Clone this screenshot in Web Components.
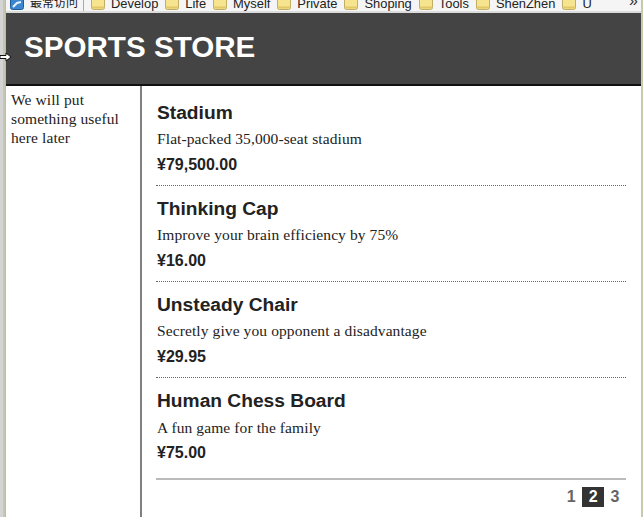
<!DOCTYPE html>
<html>
<head>
<meta charset="utf-8">
<style>
html, body { margin: 0; height: 100%; overflow: hidden; background: #fff; }
body { display: flex; flex-direction: column; height: 517px; width: 643px; position: relative; }
</style>
</head>
<body>
<window-frame>
  <bookmark-bar>
    <bookmark-item kind="star">最常访问</bookmark-item>
    <bookmark-item>Develop</bookmark-item>
    <bookmark-item>Life</bookmark-item>
    <bookmark-item>Myself</bookmark-item>
    <bookmark-item>Private</bookmark-item>
    <bookmark-item>Shoping</bookmark-item>
    <bookmark-item>Tools</bookmark-item>
    <bookmark-item>ShenZhen</bookmark-item>
    <bookmark-item>U</bookmark-item>
  </bookmark-bar>
  <store-header>SPORTS STORE</store-header>
  <store-body>
    <store-sidebar>We will put something useful here later</store-sidebar>
    <product-list>
      <product-item name="Stadium" price="¥79,500.00">Flat-packed 35,000-seat stadium</product-item>
      <product-item name="Thinking Cap" price="¥16.00">Improve your brain efficiency by 75%</product-item>
      <product-item name="Unsteady Chair" price="¥29.95">Secretly give you opponent a disadvantage</product-item>
      <product-item name="Human Chess Board" price="¥75.00" last>A fun game for the family</product-item>
      <page-links slot="pager" current="2" count="3"></page-links>
    </product-list>
  </store-body>
</window-frame>
<script>
class WindowFrame extends HTMLElement {
  constructor() {
    super()
    this.attachShadow({ mode: "open" }).innerHTML = `
    <style>
    :host { display: flex; flex: 1; min-height: 0; background: #fff; position: relative; }
    .left { width: 6px; flex: none; background: linear-gradient(to right, #d4d4d4 0, #d4d4d4 3px, #c4c8b0 3px, #c4c8b0 5px, #b9c482 5px); }
    .right { width: 2px; flex: none; background: #c6ccaa; }
    .page { flex: 1; min-width: 0; display: flex; flex-direction: column; }
    .cursor { position: absolute; left: 0; top: 52px; }
    </style>
    <div class="left"></div>
    <div class="page"><slot></slot></div>
    <div class="right"></div>
    <svg class="cursor" width="12" height="10" viewBox="0 0 12 10"><path d="M0 3.5 H6 V1 L11 5 L6 9 V6.5 H0 Z" fill="#fff" stroke="#111" stroke-width="1"/></svg>`
  }
}

class BookmarkBar extends HTMLElement {
  constructor() {
    super()
    this.attachShadow({ mode: "open" }).innerHTML = `
    <style>
    :host { display: block; height: 13px; flex: none; overflow: hidden; position: relative; box-sizing: border-box; background: #f5f5f5; border-bottom: 2px solid #dcdcdc; }
    .row { display: flex; align-items: flex-end; height: 11px; padding-left: 4px; gap: 7px; }
    .more { position: absolute; right: 3px; top: -7px; font: 16px/16px "Liberation Sans", sans-serif; color: #333; }
    ::slotted(:first-child) { margin-right: 6px; }
    .sep { position: absolute; left: 77px; top: 0; width: 1px; height: 11px; background: #aaa; }
    </style>
    <div class="row"><slot></slot></div>
    <i class="sep"></i>
    <span class="more">»</span>`
  }
}

class BookmarkItem extends HTMLElement {
  constructor() {
    super()
    const star = this.getAttribute("kind") == "star"
    const icon = star
      ? `<svg width="14" height="14" viewBox="0 0 14 14"><rect x="0.5" y="0.5" width="13" height="13" rx="2" fill="#3b86cf" stroke="#1e5c9c"/><path d="M3 11 L7 7 L11 6" stroke="#e8f2fb" stroke-width="2" fill="none"/></svg>`
      : `<svg width="14" height="14" viewBox="0 0 14 14"><rect x="0.5" y="0.5" width="13" height="13" rx="2" fill="#f6e48e" stroke="#c0ad66"/><path d="M1 11.5 H13" stroke="#e2c766" stroke-width="2"/></svg>`
    this.attachShadow({ mode: "open" }).innerHTML = `
    <style>
    :host { display: flex; align-items: flex-end; gap: 6px; font: 12.9px "Liberation Sans", "Noto Sans CJK SC", sans-serif; line-height: 15px; color: #222; height: 11px; flex: none; }
    :host([kind=star]) { font-size: 12px; }
    svg { flex: none; display: block; margin-bottom: 1px; }
    span { display: block; }
    </style>
    ${icon}<span><slot></slot></span>`
  }
}

class StoreHeader extends HTMLElement {
  constructor() {
    super()
    this.attachShadow({ mode: "open" }).innerHTML = `
    <style>
    :host { display: block; box-sizing: border-box; height: 73px; flex: none; background: #444; border-bottom: 2px solid #111; color: #fff; padding: 16px 0 0 18px; font: bold 29.6px/36px "Liberation Sans", Arial, sans-serif; }
    </style>
    <slot></slot>`
  }
}

class StoreBody extends HTMLElement {
  constructor() {
    super()
    this.attachShadow({ mode: "open" }).innerHTML = `
    <style>
    :host { display: flex; flex: 1; min-height: 0; }
    </style>
    <slot></slot>`
  }
}

class StoreSidebar extends HTMLElement {
  constructor() {
    super()
    this.attachShadow({ mode: "open" }).innerHTML = `
    <style>
    :host { display: block; box-sizing: border-box; width: 136px; flex: none; padding: 4px 5px; border-right: 2px solid #808080; color: #222; font: 15.5px/19px "Liberation Serif", serif; letter-spacing: 0.1px; }
    </style>
    <slot></slot>`
  }
}

class ProductList extends HTMLElement {
  constructor() {
    super()
    this.attachShadow({ mode: "open" }).innerHTML = `
    <style>
    :host { display: block; flex: 1; min-width: 0; padding: 15px 15px 0 14px; }
    .pager { border-top: 2px solid #bbb; margin-top: 15px; }
    </style>
    <slot></slot>
    <div class="pager"><slot name="pager"></slot></div>`
  }
}

class ProductItem extends HTMLElement {
  constructor() {
    super()
    this.attachShadow({ mode: "open" }).innerHTML = `
    <style>
    :host { display: block; padding: 0 0 10px 1px; border-bottom: 1px dotted #666; margin-bottom: 11px; color: #222; }
    :host([last]) { border-bottom: 0; padding-bottom: 0; margin-bottom: 0; }
    h3 { margin: 0; font: bold 19.2px/24px "Liberation Sans", sans-serif; }
    p { margin: 5px 0 7px; font: 15.5px/18px "Liberation Serif", serif; letter-spacing: 0.1px; }
    :host([last]) p { margin: 6px 0 6px; }
    b { display: block; font: bold 16px/20px "Liberation Sans", sans-serif; }
    </style>
    <h3></h3>
    <p><slot></slot></p>
    <b></b>`
    this.shadowRoot.querySelector("h3").textContent = this.getAttribute("name")
    this.shadowRoot.querySelector("b").textContent = this.getAttribute("price")
  }
}

class PageLinks extends HTMLElement {
  constructor() {
    super()
    const current = Number(this.getAttribute("current"))
    const count = Number(this.getAttribute("count"))
    let links = ""
    for (let i = 1; i <= count; i++) {
      links += `<a class="${i == current ? "on" : ""}">${i}</a>`
    }
    this.attachShadow({ mode: "open" }).innerHTML = `
    <style>
    :host { display: flex; justify-content: flex-end; padding: 7px 0 0; font: bold 16px/20px "Liberation Sans", sans-serif; color: #666; }
    a { display: block; padding: 0 6.5px; }
    a.on { background: #333; color: #fff; }
    </style>
    ${links}`
  }
}

customElements.define("window-frame", WindowFrame)
customElements.define("bookmark-bar", BookmarkBar)
customElements.define("bookmark-item", BookmarkItem)
customElements.define("store-header", StoreHeader)
customElements.define("store-body", StoreBody)
customElements.define("store-sidebar", StoreSidebar)
customElements.define("product-list", ProductList)
customElements.define("product-item", ProductItem)
customElements.define("page-links", PageLinks)
</script>
</body>
</html>
